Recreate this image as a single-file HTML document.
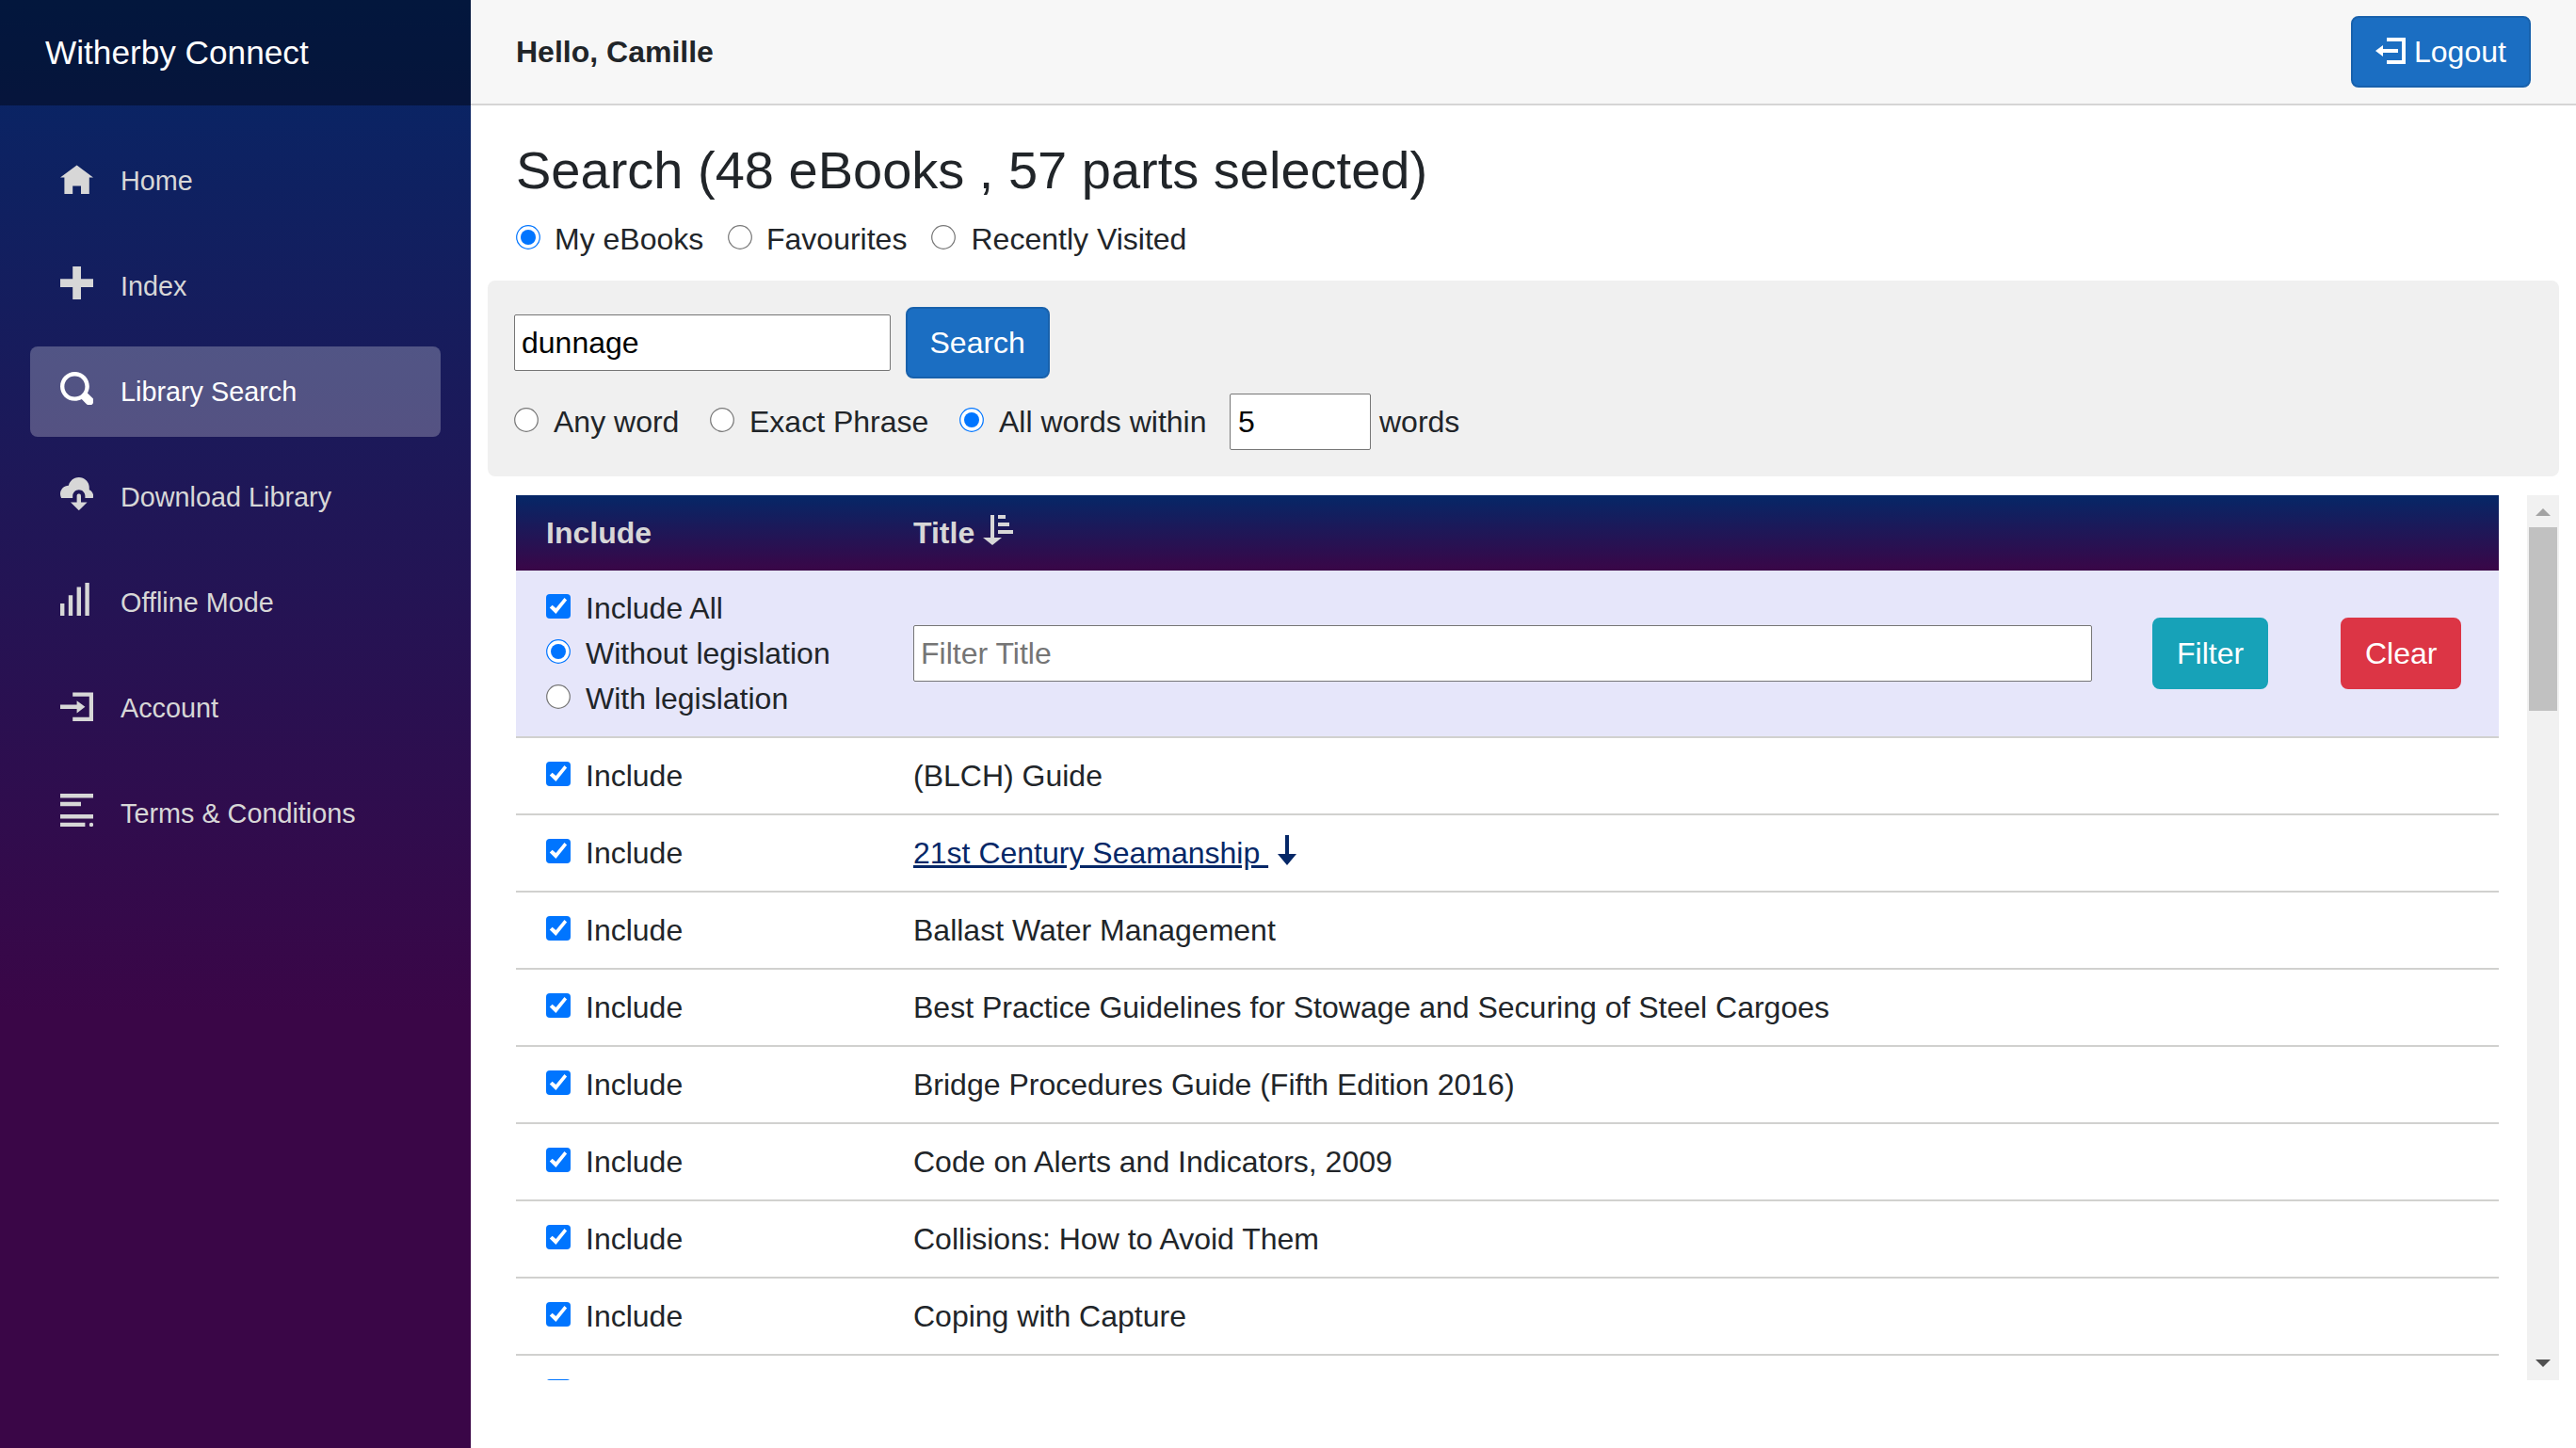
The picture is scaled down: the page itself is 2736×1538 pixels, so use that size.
<!DOCTYPE html>
<html><head><meta charset="utf-8">
<style>
html,body{margin:0;padding:0;}
body{width:2736px;height:1538px;overflow:hidden;position:relative;background:#fff;font-family:"Liberation Sans",sans-serif;color:#212529;}
.a{position:absolute;}
.t{position:absolute;white-space:nowrap;font-size:32px;line-height:48px;}
#side{left:0;top:0;width:500px;height:1538px;background-image:linear-gradient(180deg,rgb(5,39,103) 0%,#3a0647 70%);}
#brand{left:0;top:0;width:500px;height:112px;background:rgba(0,0,0,.4);}
.nav{position:absolute;left:32px;width:436px;height:96px;border-radius:8px;color:#d7d7d7;}
.nav.act{background:rgba(255,255,255,.25);color:#fff;}
.nav .lbl{position:absolute;left:96px;top:32px;font-size:28.8px;line-height:32px;white-space:nowrap;}
.nav svg{position:absolute;left:32px;top:26.5px;width:35.2px;height:35.2px;fill:currentColor;}
#toprow{left:500px;top:0;width:2236px;height:110px;background:#f7f7f7;border-bottom:2px solid #d6d5d5;}
.btn{position:absolute;box-sizing:border-box;border:2px solid;border-radius:8px;color:#fff;}
.inp{position:absolute;box-sizing:border-box;border:1px solid #767676;border-radius:2px;background:#fff;}
.cb{position:absolute;width:26px;height:26px;}
.rd{position:absolute;width:26px;height:26px;}
.row{position:absolute;left:2px;width:2106px;height:80px;border-bottom:2px solid #d1d1cf;}
</style></head><body>

<!-- SIDEBAR -->
<div id="side" class="a">
  <div id="brand" class="a"><div class="t" style="left:48px;top:36px;font-size:35.2px;line-height:39px;color:#fff;">Witherby Connect</div></div>

  <div class="nav" style="top:144px;"><svg viewBox="0 0 8 8"><path transform="translate(0 1)" d="M4 0l-4 3h1v4h2v-2h2v2h2v-4.03l1 .03-4-3z"/></svg><div class="lbl">Home</div></div>
  <div class="nav" style="top:256px;"><svg viewBox="0 0 8 8"><path d="M3 0v3h-3v2h3v3h2v-3h3v-2h-3v-3h-2z"/></svg><div class="lbl">Index</div></div>
  <div class="nav act" style="top:368px;"><svg viewBox="0 0 8 8"><path d="M3.5 0c-1.93 0-3.5 1.57-3.5 3.5s1.57 3.5 3.5 3.5c.59 0 1.17-.14 1.66-.41a1 1 0 0 0 .13.13l1 1a1.02 1.02 0 1 0 1.44-1.44l-1-1a1 1 0 0 0-.16-.13c.27-.49.44-1.06.44-1.66 0-1.93-1.57-3.5-3.5-3.5zm0 1c1.39 0 2.5 1.11 2.5 2.5 0 .66-.24 1.27-.66 1.72-.01.01-.02.02-.03.03a1 1 0 0 0-.13.13c-.44.4-1.040.63-1.69.63-1.39 0-2.5-1.11-2.5-2.5s1.11-2.5 2.5-2.5z"/></svg><div class="lbl">Library Search</div></div>
  <div class="nav" style="top:480px;"><svg viewBox="0 0 8 8"><path d="M4.5 0c-1.21 0-2.27.86-2.5 2-1.1 0-2 .9-2 2 0 .37.11.71.28 1h2.72v-.5c0-.83.67-1.5 1.5-1.5s1.5.67 1.5 1.5v.5h1.910c.06-.16.09-.32.09-.5 0-.65-.42-1.29-1-1.5v-.5c0-1.38-1.12-2.5-2.5-2.5zm-.16 4a.5.5 0 0 0-.34.5v1.5h-1.5l2 2 2-2h-1.5v-1.5a.5.5 0 0 0-.59-.5.5.5 0 0 0-.06 0z"/></svg><div class="lbl">Download Library</div></div>
  <div class="nav" style="top:592px;"><svg viewBox="0 0 8 8"><path d="M6 0v8h1v-8h-1zm-2 1v7h1v-7h-1zm-2 2v5h1v-5h-1zm-2 2v3h1v-3h-1z"/></svg><div class="lbl">Offline Mode</div></div>
  <div class="nav" style="top:704px;"><svg viewBox="0 0 8 8"><path transform="translate(0 1)" d="M3 0v1h4v5h-4v1h5v-7h-5zm1 2v1h-4v1h4v1l2-1.5-2-1.5z"/></svg><div class="lbl">Account</div></div>
  <div class="nav" style="top:816px;"><svg viewBox="0 0 8 8"><path d="M0 0h8v1h-8zM0 2h5v1h-5zM0 5h8v1h-8zM0 7h6v1h-6z"/><circle cx="7.5" cy="7.5" r=".5"/></svg><div class="lbl">Terms &amp; Conditions</div></div>
</div>

<!-- TOP ROW -->
<div id="toprow" class="a"></div>
<div class="t" style="left:548px;top:31px;font-weight:bold;">Hello, Camille</div>
<div class="btn" style="left:2497px;top:17px;width:191px;height:76px;background:#1b6ec2;border-color:#1861ac;">
  <svg class="a" style="left:24px;top:17px;width:32px;height:32px;fill:#fff;" viewBox="0 0 8 8"><path transform="translate(0 1)" d="M3 0v1h4v5h-4v1h5v-7h-5zm-1 2l-2 1.5 2 1.5v-1h4v-1h-4v-1z"/></svg>
  <div class="t" style="left:65px;top:12px;">Logout</div>
</div>

<!-- TITLE -->
<div class="t" style="left:548px;top:149px;font-size:56px;line-height:63px;">Search (48 eBooks , 57 parts selected)</div>


<!-- RADIO ROW 1 -->
<svg class="rd" style="left:548px;top:239px;" viewBox="0 0 26 26"><circle cx="13" cy="13" r="12.3" fill="#fff" stroke="#0075ff" stroke-width="1.2"/><circle cx="13" cy="13" r="8" fill="#0075ff"/></svg>
<div class="t" style="left:589px;top:230px;">My eBooks</div>
<svg class="rd" style="left:773px;top:239px;" viewBox="0 0 26 26"><circle cx="13" cy="13" r="12.3" fill="#fff" stroke="#767676" stroke-width="1.2"/></svg>
<div class="t" style="left:814px;top:230px;">Favourites</div>
<svg class="rd" style="left:989px;top:239px;" viewBox="0 0 26 26"><circle cx="13" cy="13" r="12.3" fill="#fff" stroke="#767676" stroke-width="1.2"/></svg>
<div class="t" style="left:1031.5px;top:230px;">Recently Visited</div>

<!-- SEARCH PANEL -->
<div class="a" style="left:518px;top:298px;width:2200px;height:208px;background:#f0f0f0;border-radius:8px;"></div>
<div class="inp" style="left:546px;top:334px;width:400px;height:60px;"><div class="t" style="left:7px;top:5px;color:#000;">dunnage</div></div>
<div class="btn" style="left:962px;top:326px;width:153px;height:76px;background:#1b6ec2;border-color:#1861ac;"><div class="t" style="left:23.5px;top:12px;">Search</div></div>

<svg class="rd" style="left:546px;top:433px;" viewBox="0 0 26 26"><circle cx="13" cy="13" r="12.3" fill="#fff" stroke="#767676" stroke-width="1.2"/></svg>
<div class="t" style="left:588px;top:424px;">Any word</div>
<svg class="rd" style="left:754px;top:433px;" viewBox="0 0 26 26"><circle cx="13" cy="13" r="12.3" fill="#fff" stroke="#767676" stroke-width="1.2"/></svg>
<div class="t" style="left:796px;top:424px;">Exact Phrase</div>
<svg class="rd" style="left:1019px;top:433px;" viewBox="0 0 26 26"><circle cx="13" cy="13" r="12.3" fill="#fff" stroke="#0075ff" stroke-width="1.2"/><circle cx="13" cy="13" r="8" fill="#0075ff"/></svg>
<div class="t" style="left:1061px;top:424px;">All words within</div>
<div class="inp" style="left:1306px;top:418px;width:150px;height:60px;"><div class="t" style="left:8px;top:5px;color:#000;">5</div></div>
<div class="t" style="left:1465px;top:424px;">words</div>

<!-- TABLE -->
<div class="a" style="left:546px;top:526px;width:2172px;height:940px;overflow:hidden;">
  <div class="a" style="left:2px;top:0;width:2106px;height:80px;background-image:linear-gradient(180deg,rgb(5,39,103) 0%,#3a0647 100%);color:#d7d7d7;font-weight:bold;">
    <div class="t" style="left:32px;top:16px;">Include</div>
    <div class="t" style="left:422px;top:16px;">Title</div>
    <svg class="a" style="left:496px;top:21px;width:32px;height:32px;fill:#d7d7d7;" viewBox="0 0 8 8"><path d="M2 0v6h-2l2.5 2 2.5-2h-2v-6h-1zm2 0v1h2v-1h-2zm0 2v1h3v-1h-3zm0 2v1h4v-1h-4z"/></svg>
  </div>
  <div class="a" style="left:2px;top:80px;width:2106px;height:176px;background:#e6e6fa;border-bottom:2px solid #d1d1cf;">
    <svg class="cb" style="left:32px;top:25px;" viewBox="0 0 26 26"><rect x="0" y="0" width="26" height="26" rx="4" fill="#0075ff"/><path d="M3.8 14.4L6.6 11.7L10.4 15L19.5 4L22.1 6.6L10.4 21z" fill="#fff"/></svg><div class="t" style="left:74px;top:16px;">Include All</div><svg class="rd" style="left:32px;top:73px;" viewBox="0 0 26 26"><circle cx="13" cy="13" r="12.3" fill="#fff" stroke="#0075ff" stroke-width="1.2"/><circle cx="13" cy="13" r="8" fill="#0075ff"/></svg><div class="t" style="left:74px;top:64px;">Without legislation</div><svg class="rd" style="left:32px;top:121px;" viewBox="0 0 26 26"><circle cx="13" cy="13" r="12.3" fill="#fff" stroke="#767676" stroke-width="1.2"/></svg><div class="t" style="left:74px;top:112px;">With legislation</div><div class="inp" style="left:422px;top:58px;width:1252px;height:60px;"><div class="t" style="left:7px;top:5px;color:#757575;">Filter Title</div></div><div class="btn" style="left:1738px;top:50px;width:123px;height:76px;background:#17a2b8;border-color:#17a2b8;"><div class="t" style="left:24px;top:12px;">Filter</div></div><div class="btn" style="left:1938px;top:50px;width:128px;height:76px;background:#dc3545;border-color:#dc3545;"><div class="t" style="left:24px;top:12px;">Clear</div></div>
  </div>
  <div class="row" style="top:258px;"><svg class="cb" style="left:32px;top:25px;" viewBox="0 0 26 26"><rect x="0" y="0" width="26" height="26" rx="4" fill="#0075ff"/><path d="M3.8 14.4L6.6 11.7L10.4 15L19.5 4L22.1 6.6L10.4 21z" fill="#fff"/></svg><div class="t" style="left:74px;top:16px;">Include</div><div class="t" style="left:422px;top:16px;">(BLCH) Guide</div></div>
<div class="row" style="top:340px;"><svg class="cb" style="left:32px;top:25px;" viewBox="0 0 26 26"><rect x="0" y="0" width="26" height="26" rx="4" fill="#0075ff"/><path d="M3.8 14.4L6.6 11.7L10.4 15L19.5 4L22.1 6.6L10.4 21z" fill="#fff"/></svg><div class="t" style="left:74px;top:16px;">Include</div><div class="t" style="left:422px;top:16px;"><span style="color:#052767;text-decoration:underline;">21st Century Seamanship&nbsp;</span></div><svg class="a" style="left:805px;top:21px;width:32px;height:32px;fill:#052767;" viewBox="0 0 8 8"><path transform="translate(1)" d="M2 0v5h-2l2.5 3 2.5-3h-2v-5h-1z"/></svg></div>
<div class="row" style="top:422px;"><svg class="cb" style="left:32px;top:25px;" viewBox="0 0 26 26"><rect x="0" y="0" width="26" height="26" rx="4" fill="#0075ff"/><path d="M3.8 14.4L6.6 11.7L10.4 15L19.5 4L22.1 6.6L10.4 21z" fill="#fff"/></svg><div class="t" style="left:74px;top:16px;">Include</div><div class="t" style="left:422px;top:16px;">Ballast Water Management</div></div>
<div class="row" style="top:504px;"><svg class="cb" style="left:32px;top:25px;" viewBox="0 0 26 26"><rect x="0" y="0" width="26" height="26" rx="4" fill="#0075ff"/><path d="M3.8 14.4L6.6 11.7L10.4 15L19.5 4L22.1 6.6L10.4 21z" fill="#fff"/></svg><div class="t" style="left:74px;top:16px;">Include</div><div class="t" style="left:422px;top:16px;">Best Practice Guidelines for Stowage and Securing of Steel Cargoes</div></div>
<div class="row" style="top:586px;"><svg class="cb" style="left:32px;top:25px;" viewBox="0 0 26 26"><rect x="0" y="0" width="26" height="26" rx="4" fill="#0075ff"/><path d="M3.8 14.4L6.6 11.7L10.4 15L19.5 4L22.1 6.6L10.4 21z" fill="#fff"/></svg><div class="t" style="left:74px;top:16px;">Include</div><div class="t" style="left:422px;top:16px;">Bridge Procedures Guide (Fifth Edition 2016)</div></div>
<div class="row" style="top:668px;"><svg class="cb" style="left:32px;top:25px;" viewBox="0 0 26 26"><rect x="0" y="0" width="26" height="26" rx="4" fill="#0075ff"/><path d="M3.8 14.4L6.6 11.7L10.4 15L19.5 4L22.1 6.6L10.4 21z" fill="#fff"/></svg><div class="t" style="left:74px;top:16px;">Include</div><div class="t" style="left:422px;top:16px;">Code on Alerts and Indicators, 2009</div></div>
<div class="row" style="top:750px;"><svg class="cb" style="left:32px;top:25px;" viewBox="0 0 26 26"><rect x="0" y="0" width="26" height="26" rx="4" fill="#0075ff"/><path d="M3.8 14.4L6.6 11.7L10.4 15L19.5 4L22.1 6.6L10.4 21z" fill="#fff"/></svg><div class="t" style="left:74px;top:16px;">Include</div><div class="t" style="left:422px;top:16px;">Collisions: How to Avoid Them</div></div>
<div class="row" style="top:832px;"><svg class="cb" style="left:32px;top:25px;" viewBox="0 0 26 26"><rect x="0" y="0" width="26" height="26" rx="4" fill="#0075ff"/><path d="M3.8 14.4L6.6 11.7L10.4 15L19.5 4L22.1 6.6L10.4 21z" fill="#fff"/></svg><div class="t" style="left:74px;top:16px;">Include</div><div class="t" style="left:422px;top:16px;">Coping with Capture</div></div>
<div class="row" style="top:914px;"><svg class="cb" style="left:32px;top:25px;" viewBox="0 0 26 26"><rect x="0" y="0" width="26" height="26" rx="4" fill="#0075ff"/><path d="M3.8 14.4L6.6 11.7L10.4 15L19.5 4L22.1 6.6L10.4 21z" fill="#fff"/></svg><div class="t" style="left:74px;top:16px;">Include</div><div class="t" style="left:422px;top:16px;">Dangerous Goods</div></div>

</div>
<!-- SCROLLBAR -->
<div class="a" style="left:2684px;top:526px;width:34px;height:940px;background:#f1f1f1;"></div>
<svg class="a" style="left:2684px;top:526px;width:34px;height:34px;" viewBox="0 0 34 34"><path d="M9 22h16l-8-8z" fill="#a3a3a3"/></svg>
<div class="a" style="left:2686px;top:560px;width:30px;height:195px;background:#c1c1c1;"></div>
<svg class="a" style="left:2684px;top:1432px;width:34px;height:34px;" viewBox="0 0 34 34"><path d="M9 12h16l-8 8z" fill="#505050"/></svg>
</body></html>
